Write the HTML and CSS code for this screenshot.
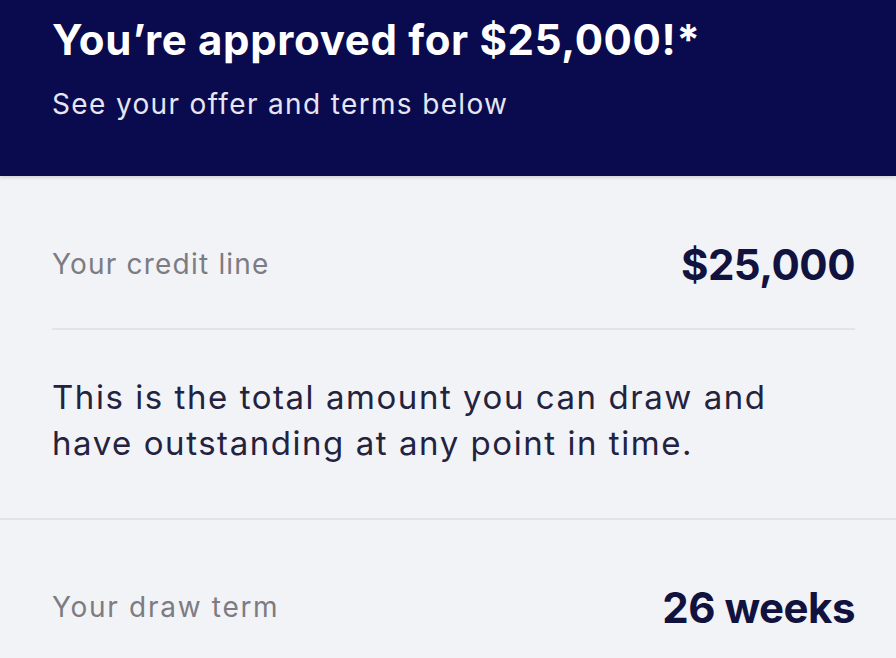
FILE: index.html
```html
<!DOCTYPE html>
<html>
<head>
<meta charset="utf-8">
<link rel="stylesheet" href="styles.css">
</head>
<body>
<header class="hero">
  <h1 class="hero-title">You’re approved for $25,000!*</h1>
  <p class="hero-sub">See your offer and terms below</p>
</header>
<main class="offer">
  <div class="inset">
    <div class="term-row first">
      <span class="term-label">Your credit line</span>
      <span class="term-value">$25,000</span>
    </div>
    <p class="term-desc">This is the total amount you can draw and<br>have outstanding at any point in time.</p>
  </div>
  <div class="inset">
    <div class="term-row second">
      <span class="term-label wide">Your draw term</span>
      <span class="term-value">26 weeks</span>
    </div>
  </div>
</main>
</body>
</html>
```
FILE: styles.css
```css
html, body {
  margin: 0;
  padding: 0;
  background: #f2f3f7;
  font-family: Inter, "Noto Sans", sans-serif;
}
.hero {
  background: #0a0a4e;
  height: 176px;
  box-sizing: border-box;
  padding: 16px 0 0 52px;
  box-shadow: 0 2px 3px rgba(0,0,0,0.12);
  position: relative;
}
.hero-title {
  margin: 0;
  color: #ffffff;
  font-size: 42px;
  line-height: 48px;
  font-weight: 700;
  letter-spacing: 0.65px;
}
.hero-sub {
  margin: 22px 0 0;
  color: #e6e6f2;
  font-size: 28px;
  line-height: 36px;
  font-weight: 400;
  letter-spacing: 1.35px;
}
.offer {
  display: flex;
  flex-direction: column;
}
.inset {
  padding: 0 41px 0 52px;
  border-bottom: 2px solid #e3e4ea;
}
.inset:last-child {
  border-bottom: none;
}
.term-row {
  display: flex;
  justify-content: space-between;
  align-items: center;
  height: 56px;
}
.term-row.first {
  padding: 60px 0 36px;
  border-bottom: 2px solid #e3e4ea;
}
.term-row.second {
  padding-top: 59px;
}
.term-label {
  color: #7c7c82;
  font-size: 28px;
  letter-spacing: 1.2px;
}
.term-label.wide {
  letter-spacing: 1.7px;
}
.term-value {
  color: #12123f;
  font-size: 42px;
  font-weight: 700;
  letter-spacing: -0.5px;
}
.term-desc {
  margin: 0;
  padding: 44px 0 52px;
  color: #23233f;
  font-size: 33px;
  line-height: 46px;
  letter-spacing: 1.55px;
}
```
